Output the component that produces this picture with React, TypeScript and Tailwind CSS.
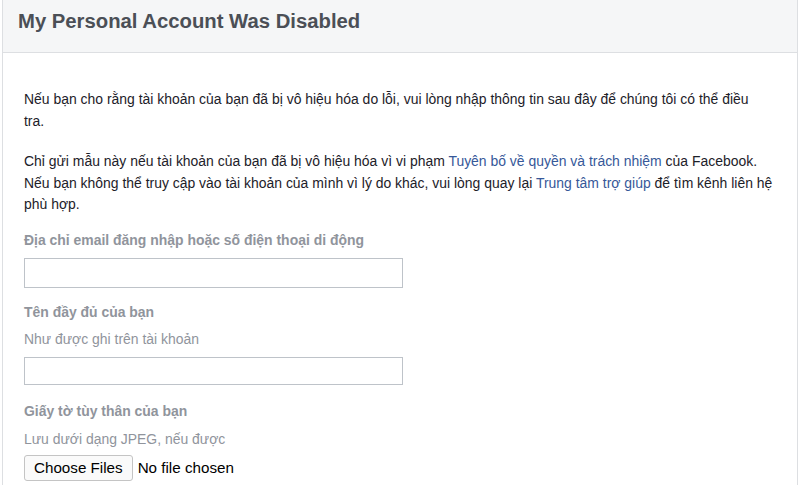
export default function App() {
  return (
    <div
      className="w-[800px] h-[485px] overflow-hidden bg-white"
      style={{ fontFamily: '"Liberation Sans", Arial, sans-serif' }}
    >
      <div className="ml-[2px] mr-[2px] h-full border-x border-[#dddfe2]">
        {/* header */}
        <div className="h-[53px] bg-[#f5f6f7] border-b border-[#dddfe2] px-[15px] pt-[9px]">
          <h1 className="text-[20.3px] font-bold text-[#4b4f56] leading-[25px]">
            My Personal Account Was Disabled
          </h1>
        </div>

        {/* body */}
        <div className="pl-[21px] pr-[16px] pt-[36px] text-[13.95px] leading-[21.5px] text-[#1d2129]">
          <p>
            Nếu bạn cho rằng tài khoản của bạn đã bị vô hiệu hóa do lỗi, vui lòng nhập thông tin sau đây để chúng tôi có thể điều
            <br />
            tra.
          </p>
          <p className="mt-[19px]">
            Chỉ gửi mẫu này nếu tài khoản của bạn đã bị vô hiệu hóa vì vi phạm{" "}
            <a className="text-[#365899]">Tuyên bố về quyền và trách nhiệm</a> của Facebook.
            Nếu bạn không thể truy cập vào tài khoản của mình vì lý do khác, vui lòng quay lại{" "}
            <a className="text-[#365899]">Trung tâm trợ giúp</a> để tìm kênh liên hệ phù hợp.
          </p>

          <div className="mt-[14px] font-bold text-[#90949c]">
            Địa chỉ email đăng nhập hoặc số điện thoại di động
          </div>
          <input className="mt-[7px] block w-[379px] h-[30px] border border-[#bec3c9] bg-white" />

          <div className="mt-[14px] font-bold text-[#90949c]">Tên đầy đủ của bạn</div>
          <div className="mt-[5px] text-[#90949c]">Như được ghi trên tài khoản</div>
          <input className="mt-[7px] block w-[379px] h-[28px] border border-[#bec3c9] bg-white" />

          <div className="mt-[16px] font-bold text-[#90949c]">Giấy tờ tùy thân của bạn</div>
          <div className="mt-[6px] text-[#90949c]">Lưu dưới dạng JPEG, nếu được</div>
          <div className="mt-[5px] flex items-center">
            <button className="h-[26px] px-[9px] border border-[#c4c4c4] rounded-[3px] bg-[#fafafa] text-[15.2px] text-black">
              Choose Files
            </button>
            <span className="ml-[5px] text-[15.2px] text-black">No file chosen</span>
          </div>
        </div>
      </div>
    </div>
  );
}
